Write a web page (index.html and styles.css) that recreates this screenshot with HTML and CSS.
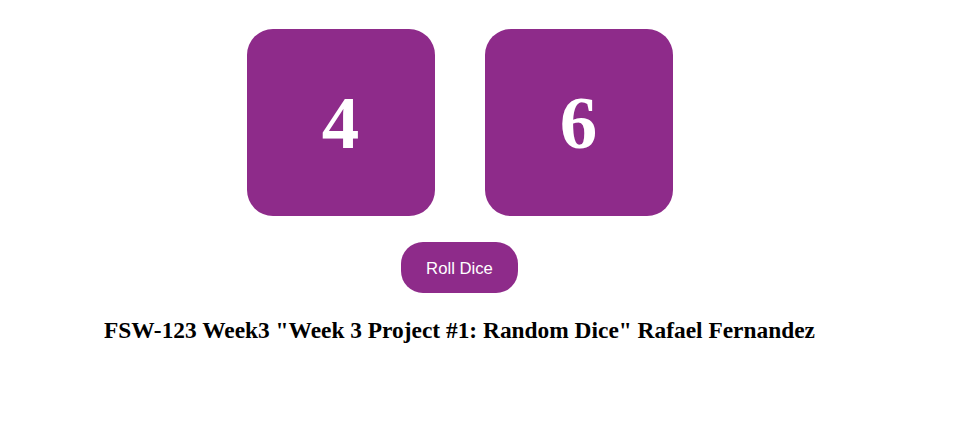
FILE: index.html
```html
<!DOCTYPE html>
<html>
<head>
<meta charset="utf-8">
<link rel="stylesheet" href="styles.css">
</head>
<body>
<div class="app">
  <div class="dice-row">
    <div class="die">4</div>
    <div class="die">6</div>
  </div>
  <button class="roll">Roll Dice</button>
  <h3 class="title">FSW-123 Week3 "Week 3 Project #1: Random Dice" Rafael Fernandez</h3>
</div>
</body>
</html>
```
FILE: styles.css
```css
html, body {
  margin: 0;
  padding: 0;
  background: #ffffff;
}
.app {
  width: 919px;
  display: flex;
  flex-direction: column;
  align-items: center;
  padding-top: 29px;
}
.dice-row {
  display: flex;
  gap: 50px;
}
.die {
  width: 188px;
  height: 187px;
  border-radius: 26px;
  background: #8e2b8a;
  color: #ffffff;
  font-family: "Liberation Serif", "Times New Roman", serif;
  font-weight: bold;
  font-size: 75px;
  display: flex;
  align-items: center;
  justify-content: center;
}
.roll {
  margin-top: 26px;
  width: 117px;
  height: 51px;
  border: none;
  border-radius: 22px;
  background: #8e2b8a;
  color: #ffffff;
  font-family: "Liberation Sans", Arial, sans-serif;
  font-size: 16.7px;
  padding: 3px 0 0 0;
}
.title {
  margin: 24px 0 0 0;
  font-family: "Liberation Serif", "Times New Roman", serif;
  font-weight: bold;
  font-size: 23.4px;
  color: #000000;
}
```
